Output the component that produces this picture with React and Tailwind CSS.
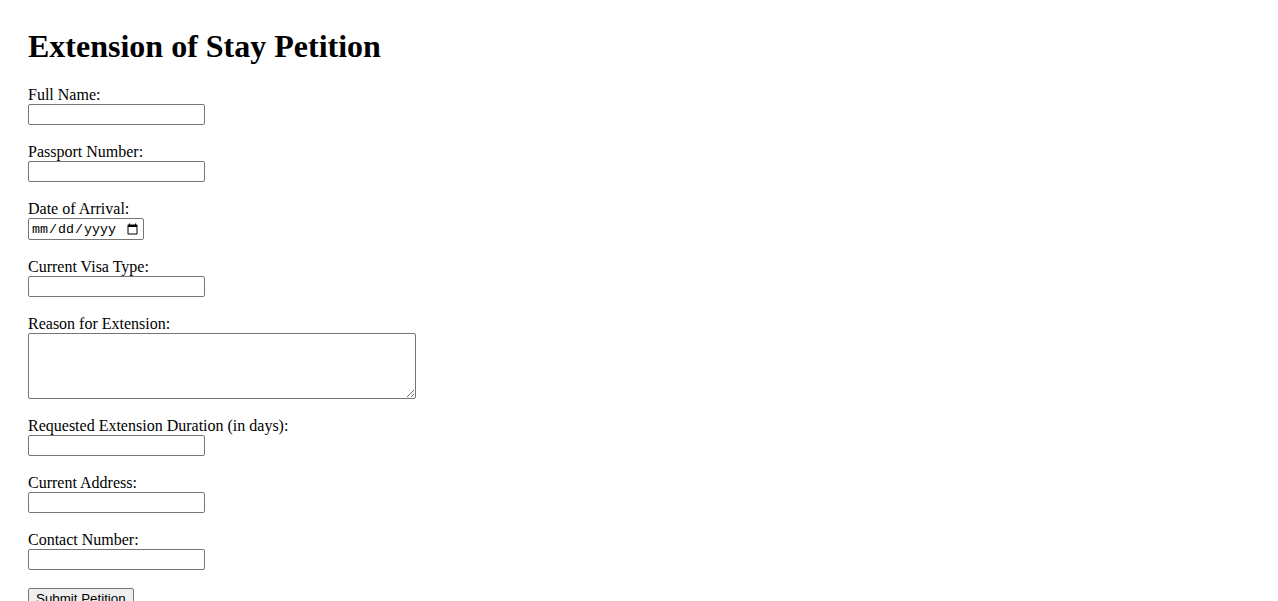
import React from "react";

const inputCls =
  "block w-[177px] h-[21px] border border-[#767676] rounded-[2px] px-[2px] py-[1px] bg-white text-[13.333px] font-['Liberation_Sans',Arial,sans-serif] text-black";

function Field({ label, children, mb = "mb-[17.9px]" }) {
  return (
    <div className={mb}>
      <label className="block leading-[normal]">{label}</label>
      {children}
    </div>
  );
}

export default function App() {
  return (
    <div className="bg-white min-h-[601px] p-[28px] font-['Liberation_Serif','Times_New_Roman',serif] text-base text-black leading-[normal]">
      <h1 className="text-[32px] font-bold leading-[normal] mb-[21.44px]">
        Extension of Stay Petition
      </h1>
      <form onSubmit={(e) => e.preventDefault()}>
        <Field label="Full Name:">
          <input type="text" className={inputCls} />
        </Field>
        <Field label="Passport Number:">
          <input type="text" className={inputCls} />
        </Field>
        <Field label="Date of Arrival:">
          <input
            type="date"
            className="block w-[116px] h-[22px] border border-[#767676] rounded-[2px] px-[2px] py-[1px] bg-white text-[13.333px] font-['Liberation_Mono','DejaVu_Sans_Mono',monospace] text-black"
          />
        </Field>
        <Field label="Current Visa Type:">
          <input type="text" className={inputCls} />
        </Field>
        <Field label="Reason for Extension:">
          <textarea className="block w-[388px] h-[66px] border border-[#767676] rounded-[2px] p-[2px] bg-white text-[13.333px] font-['Liberation_Mono',monospace] text-black resize" />
        </Field>
        <Field label="Requested Extension Duration (in days):">
          <input type="number" className={inputCls} />
        </Field>
        <Field label="Current Address:">
          <input type="text" className={inputCls} />
        </Field>
        <Field label="Contact Number:">
          <input type="tel" className={inputCls} />
        </Field>
        <button
          type="submit"
          className="block h-[21px] px-[7px] py-[1px] border border-[#767676] rounded-[2px] bg-[#efefef] text-[13.333px] leading-[normal] font-['Liberation_Sans',Arial,sans-serif] text-black"
        >
          Submit Petition
        </button>
      </form>
    </div>
  );
}
